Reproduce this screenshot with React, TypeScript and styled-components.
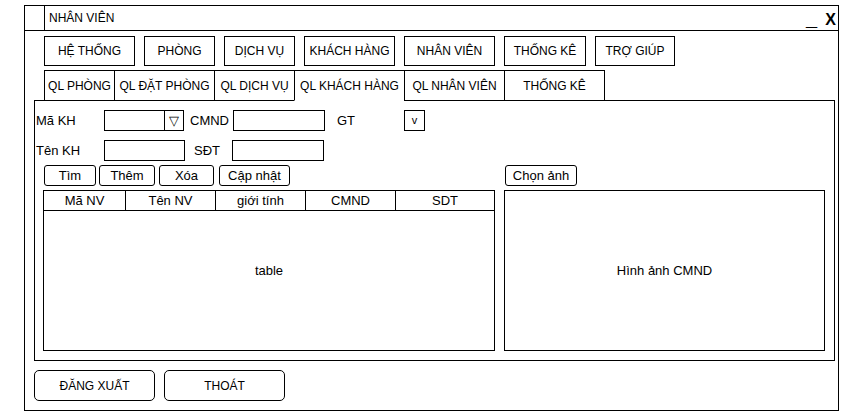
import styled, { createGlobalStyle } from 'styled-components'

const GlobalStyle = createGlobalStyle`
  html, body {
    margin: 0;
    padding: 0;
    background: #fff;
  }
  body {
    font-family: "Liberation Sans", Arial, sans-serif;
    color: #000;
  }
  * {
    box-sizing: border-box;
  }
`

const Window = styled.div`
  margin: 5px 0 0 24px;
  width: 815px;
  height: 406px;
  border: 1px solid #000;
  display: flex;
  flex-direction: column;
`

const TitleBar = styled.div`
  height: 25px;
  border-bottom: 1px solid #000;
  display: flex;
  align-items: center;
`

const TitleIcon = styled.div`
  width: 20px;
  height: 100%;
  border-right: 1px solid #000;
`

const TitleText = styled.div`
  flex: 1;
  padding-left: 4px;
  font-size: 12px;
`

const WindowControls = styled.div`
  display: flex;
  align-items: baseline;
  gap: 9px;
  padding-right: 2px;
  padding-top: 4px;
  font-size: 16px;
  font-weight: bold;
`

const Minimize = styled.span`
  display: inline-block;
  transform: translateY(-3px) scale(1.25, 1.6);
`

const Body = styled.div`
  padding: 5px 3px 0 9px;
  display: flex;
  flex-direction: column;
`

const MenuBar = styled.div`
  display: flex;
  gap: 9px;
  padding-left: 10px;
`

const MenuButton = styled.div<{ $w: number }>`
  width: ${p => p.$w}px;
  height: 30px;
  border: 1px solid #000;
  display: flex;
  align-items: center;
  justify-content: center;
  font-size: 12px;
`

const TabBar = styled.div`
  display: flex;
  margin-top: 4px;
  padding-left: 10px;
  position: relative;
  z-index: 1;
`

const Tab = styled.div<{ $w: number; $active?: boolean }>`
  width: ${p => p.$w}px;
  height: 31px;
  border: 1px solid #000;
  border-bottom-color: ${p => (p.$active ? '#fff' : '#000')};
  background: #fff;
  display: flex;
  align-items: center;
  justify-content: center;
  font-size: 12px;
  & + & {
    margin-left: -1px;
  }
`

const Panel = styled.div`
  margin-top: -1px;
  width: 801px;
  height: 261px;
  border: 1px solid #000;
  padding: 9px 0 0 1px;
  display: flex;
  flex-direction: column;
`

const FormRow = styled.div<{ $mt?: number }>`
  display: flex;
  align-items: center;
  height: 21px;
  margin-top: ${p => p.$mt ?? 0}px;
  font-size: 13px;
`

const Label = styled.div<{ $w: number; $ml?: number }>`
  width: ${p => p.$w}px;
  margin-left: ${p => p.$ml ?? 0}px;
`

const Input = styled.div<{ $w: number }>`
  width: ${p => p.$w}px;
  height: 21px;
  border: 1px solid #000;
`

const Combo = styled.div`
  width: 80px;
  height: 21px;
  border: 1px solid #000;
  display: flex;
  justify-content: flex-end;
`

const ComboArrow = styled.div`
  width: 19px;
  border-left: 1px solid #000;
  display: flex;
  align-items: center;
  justify-content: center;
  font-family: "DejaVu Sans", sans-serif;
  font-size: 13px;
`

const SmallBox = styled.div`
  width: 21px;
  height: 21px;
  border: 1px solid #000;
  display: flex;
  align-items: center;
  justify-content: center;
  font-size: 11px;
  padding-bottom: 2px;
`

const Workspace = styled.div`
  display: flex;
  gap: 9px;
  margin-top: 4px;
  padding-left: 7px;
`

const Column = styled.div<{ $w: number }>`
  width: ${p => p.$w}px;
  display: flex;
  flex-direction: column;
  gap: 4px;
`

const ActionRow = styled.div`
  display: flex;
  padding-left: 1px;
`

const SmallButton = styled.div<{ $w: number; $ml?: number }>`
  width: ${p => p.$w}px;
  margin-left: ${p => p.$ml ?? 0}px;
  height: 21px;
  border: 1px solid #000;
  border-radius: 3px;
  display: flex;
  align-items: center;
  justify-content: center;
  font-size: 13px;
`

const TableBox = styled.div`
  height: 161px;
  border: 1px solid #000;
  display: flex;
  flex-direction: column;
`

const TableHead = styled.div`
  display: flex;
  height: 20px;
  border-bottom: 1px solid #000;
`

const HeadCell = styled.div<{ $w: number }>`
  width: ${p => p.$w}px;
  display: flex;
  align-items: center;
  justify-content: center;
  font-size: 13px;
  & + & {
    border-left: 1px solid #000;
  }
  &:last-child {
    flex: 1;
  }
`

const Placeholder = styled.div`
  flex: 1;
  display: flex;
  align-items: center;
  justify-content: center;
  padding-bottom: 21px;
  font-size: 13px;
`

const ImageBox = styled.div`
  height: 161px;
  border: 1px solid #000;
  display: flex;
  align-items: center;
  justify-content: center;
  font-size: 13px;
`

const Footer = styled.div`
  display: flex;
  gap: 9px;
  margin-top: 9px;
`

const FooterButton = styled.div`
  width: 121px;
  height: 31px;
  border: 1px solid #000;
  border-radius: 5px;
  display: flex;
  align-items: center;
  justify-content: center;
  font-size: 12px;
`

const menus: [string, number][] = [
  ['HỆ THỐNG', 91],
  ['PHÒNG', 71],
  ['DỊCH VỤ', 71],
  ['KHÁCH HÀNG', 91],
  ['NHÂN VIÊN', 91],
  ['THỐNG KÊ', 82],
  ['TRỢ GIÚP', 80],
]

const tabs: [string, number][] = [
  ['QL PHÒNG', 71],
  ['QL ĐẶT PHÒNG', 101],
  ['QL DỊCH VỤ', 81],
  ['QL KHÁCH HÀNG', 111],
  ['QL NHÂN VIÊN', 101],
  ['THỐNG KÊ', 101],
]

const columns: [string, number][] = [
  ['Mã NV', 81],
  ['Tên NV', 90],
  ['giới tính', 90],
  ['CMND', 90],
  ['SDT', 100],
]

export default function App() {
  return (
    <>
      <GlobalStyle />
      <Window>
        <TitleBar>
          <TitleIcon />
          <TitleText>NHÂN VIÊN</TitleText>
          <WindowControls>
            <Minimize>_</Minimize>
            <span>X</span>
          </WindowControls>
        </TitleBar>
        <Body>
          <MenuBar>
            {menus.map(([name, w]) => (
              <MenuButton key={name} $w={w}>{name}</MenuButton>
            ))}
          </MenuBar>
          <TabBar>
            {tabs.map(([name, w]) => (
              <Tab key={name} $w={w} $active={name === 'QL KHÁCH HÀNG'}>{name}</Tab>
            ))}
          </TabBar>
          <Panel>
            <FormRow>
              <Label $w={68}>Mã KH</Label>
              <Combo>
                <ComboArrow>▽</ComboArrow>
              </Combo>
              <Label $w={43} $ml={6}>CMND</Label>
              <Input $w={92} />
              <Label $w={67} $ml={12}>GT</Label>
              <SmallBox>v</SmallBox>
            </FormRow>
            <FormRow $mt={9}>
              <Label $w={68}>Tên KH</Label>
              <Input $w={81} />
              <Label $w={38} $ml={9}>SĐT</Label>
              <Input $w={92} />
            </FormRow>
            <Workspace>
              <Column $w={452}>
                <ActionRow>
                  <SmallButton $w={52}>Tìm</SmallButton>
                  <SmallButton $w={56} $ml={3}>Thêm</SmallButton>
                  <SmallButton $w={55} $ml={4}>Xóa</SmallButton>
                  <SmallButton $w={71} $ml={5}>Cập nhật</SmallButton>
                </ActionRow>
                <TableBox>
                  <TableHead>
                    {columns.map(([name, w]) => (
                      <HeadCell key={name} $w={w}>{name}</HeadCell>
                    ))}
                  </TableHead>
                  <Placeholder>table</Placeholder>
                </TableBox>
              </Column>
              <Column $w={321}>
                <ActionRow>
                  <SmallButton $w={72}>Chọn ảnh</SmallButton>
                </ActionRow>
                <ImageBox>Hình ảnh CMND</ImageBox>
              </Column>
            </Workspace>
          </Panel>
          <Footer>
            <FooterButton>ĐĂNG XUẤT</FooterButton>
            <FooterButton>THOÁT</FooterButton>
          </Footer>
        </Body>
      </Window>
    </>
  )
}
